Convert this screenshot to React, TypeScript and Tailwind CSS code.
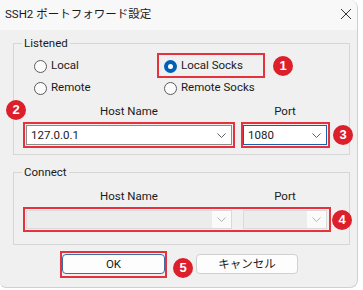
import React from 'react';

const font = { fontFamily: 'Roboto, "Noto Sans CJK JP", sans-serif' };

const Badge = ({ n, className }: { n: number; className: string }) => (
  <span
    className={`absolute w-[20px] h-[20px] rounded-full bg-[#dc1f2b] text-white text-[13px] font-bold leading-[20px] text-center ${className}`}
    style={{ fontFamily: '"Liberation Sans", Arial, sans-serif' }}
  >
    {n}
  </span>
);

const Radio = ({ checked, label }: { checked?: boolean; label: string }) => (
  <span className="flex items-center h-[22px]">
    {checked ? (
      <span className="w-[13px] h-[13px] rounded-full bg-[#005fb8] flex items-center justify-center">
        <span className="w-[5px] h-[5px] rounded-full bg-white" />
      </span>
    ) : (
      <span className="w-[13px] h-[13px] rounded-full border border-[#5c5c5c] bg-[#fbfbfb]" />
    )}
    <span className="ml-[4px] text-[11.5px] text-[#1a1a1a]">{label}</span>
  </span>
);

const Chevron = ({ color = '#606060' }: { color?: string }) => (
  <svg width="9" height="5" viewBox="0 0 9 5" className="shrink-0">
    <path d="M0.5 0.5 L4.5 4.5 L8.5 0.5" fill="none" stroke={color} strokeWidth="1" />
  </svg>
);

const Combo = ({
  value,
  width,
  focused,
  disabled,
}: {
  value?: string;
  width: string;
  focused?: boolean;
  disabled?: boolean;
}) => {
  if (disabled) {
    return (
      <div className={`${width} h-[19px] flex border border-[#dadada] bg-[#f4f4f4]`}>
        <div className="flex-1 bg-[#ececec]" />
        <div className="w-[19px] flex items-center justify-center bg-[#fafafa]">
          <Chevron color="#b4b4b4" />
        </div>
      </div>
    );
  }
  return (
    <div
      className={`${width} h-[20px] flex items-center pl-[4px] pr-[5px] bg-white border ${
        focused ? 'border-[#1b5fa8]' : 'border-[#8c8c8c]'
      }`}
    >
      <span className="flex-1 text-[11.5px] text-[#1a1a1a] leading-[18px]">{value}</span>
      <Chevron />
    </div>
  );
};

export default function App() {
  return (
    <div className="w-[363px] h-[290px] bg-white text-[11.5px]" style={font}>
      <div className="relative w-[358px] h-[288px] bg-[#f0f0f0] rounded-tr-[8px] rounded-br-[8px] rounded-bl-[6px] border-r border-b border-[#cfcfcf] overflow-hidden">
        {/* title bar */}
        <div className="h-[30px] flex items-center pl-[5px] pr-[5px] bg-[#f8f8f8]">
          <span className="flex-1 text-[11.5px] text-[#1a1a1a]">SSH2 ポートフォワード設定</span>
          <svg width="12" height="12" viewBox="0 0 12 12" className="mb-[3px]">
            <path d="M1 1 L11 11 M11 1 L1 11" stroke="#333" strokeWidth="1" />
          </svg>
        </div>

        <div className="pl-[13px] pt-[5px]">
          {/* Listened */}
          <fieldset className="w-[337px] h-[120px] border border-[#d6d6d6]">
            <legend className="ml-[8px] px-[2px] text-[11.5px] leading-[16px] text-[#1a1a1a]">Listened</legend>
            <div className="pt-[4px] pl-[20px] grid grid-cols-[130px_1fr]">
              <Radio label="Local" />
              <span className="relative">
                <Radio checked label="Local Socks" />
                <span className="absolute left-[-7px] top-[-2px] w-[108px] h-[25px] border-2 border-[#e5323c]" />
              </span>
              <Radio label="Remote" />
              <Radio label="Remote Socks" />
            </div>
            <div className="mt-[4px] pl-[12px] flex gap-[11px] text-[11.5px] leading-[16px] text-[#1a1a1a]">
              <span className="w-[206px] text-center">Host Name</span>
              <span className="w-[84px] text-center">Port</span>
            </div>
            <div className="mt-[6px] pl-[12px] flex gap-[11px]">
              <div className="relative">
                <Combo value="127.0.0.1" width="w-[206px]" />
                <span className="absolute -inset-[3px] border-2 border-[#e5323c]" />
              </div>
              <div className="relative">
                <Combo value="1080" width="w-[84px]" focused />
                <span className="absolute -left-[2px] -right-[3px] -top-[3px] -bottom-[3px] border-2 border-[#e5323c]" />
              </div>
            </div>
          </fieldset>

          {/* Connect */}
          <fieldset className="mt-[9px] w-[337px] h-[81px] border border-[#d6d6d6]">
            <legend className="ml-[8px] px-[2px] text-[11.5px] leading-[16px] text-[#1a1a1a]">Connect</legend>
            <div className="mt-[8px] pl-[12px] flex gap-[11px] text-[11.5px] leading-[16px] text-[#1a1a1a]">
              <span className="w-[206px] text-center">Host Name</span>
              <span className="w-[84px] text-center">Port</span>
            </div>
            <div className="mt-[6px] pl-[12px]">
              <div className="relative inline-flex gap-[11px]">
                <Combo width="w-[206px]" disabled />
                <Combo width="w-[84px]" disabled />
                <span className="absolute -left-[3px] -right-[4px] -top-[3px] -bottom-[3px] border-2 border-[#e5323c]" />
              </div>
            </div>
          </fieldset>

          {/* buttons */}
          <div className="mt-[9px] pl-[49px] flex gap-[31px]">
            <div className="relative">
              <button className="w-[103px] h-[20px] rounded-[4px] bg-[#fdfdfd] border border-[#3a6ea5] text-[11.5px] leading-[18px] text-[#1a1a1a]">
                OK
              </button>
              <span className="absolute -left-[2px] -right-[2px] -top-[3px] -bottom-[4px] border-2 border-[#e5323c]" />
            </div>
            <button className="w-[102px] h-[20px] rounded-[4px] bg-[#fdfdfd] border border-[#d0d0d0] text-[11.5px] leading-[18px] text-[#1a1a1a]">
              キャンセル
            </button>
          </div>
        </div>

        <Badge n={1} className="left-[273px] top-[56px]" />
        <Badge n={2} className="left-[6px] top-[100px]" />
        <Badge n={3} className="left-[333px] top-[125px]" />
        <Badge n={4} className="left-[332px] top-[210px]" />
        <Badge n={5} className="left-[173px] top-[258px]" />
      </div>
    </div>
  );
}
